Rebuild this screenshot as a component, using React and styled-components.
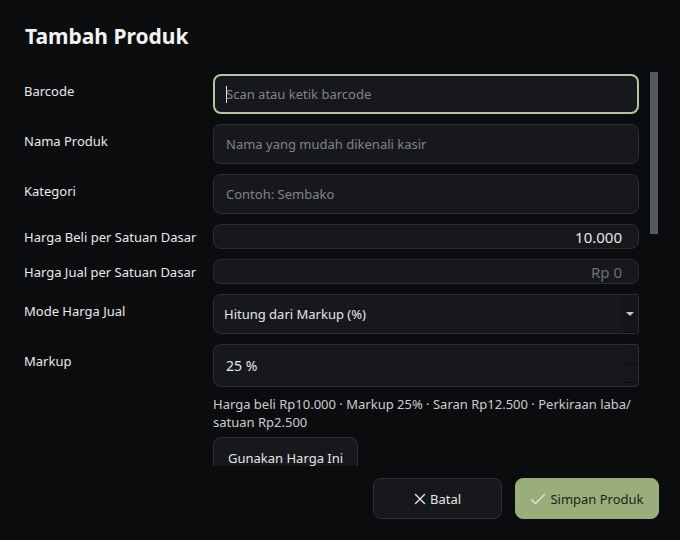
import React from 'react';
import styled, { createGlobalStyle, css } from 'styled-components';

const GlobalStyle = createGlobalStyle`
  html, body {
    margin: 0;
    padding: 0;
    background: #0b0c0e;
  }
  body {
    font-family: "Noto Sans", "DejaVu Sans", sans-serif;
    font-size: 13px;
    color: #e6e7e8;
  }
  * {
    box-sizing: border-box;
  }
`;

const Dialog = styled.div`
  width: 680px;
  height: 540px;
  display: flex;
  flex-direction: column;
  background: #0b0c0e;
  overflow: hidden;
`;

const Title = styled.h1`
  margin: 0;
  padding: 22px 25px 22px;
  font-size: 21px;
  line-height: 28px;
  font-weight: 700;
  color: #f3f3f3;
`;

const Body = styled.div`
  display: flex;
  gap: 11px;
  padding-left: 24px;
  height: 394px;
`;

const Scroller = styled.div`
  width: 615px;
  height: 100%;
  overflow: hidden;
`;

const Track = styled.div`
  width: 8px;
  height: 100%;
`;

const Thumb = styled.div`
  width: 100%;
  background: #56595e;
`;

const Form = styled.div`
  display: grid;
  grid-template-columns: 189px 426px;
  row-gap: 10px;
  padding-top: 2px;
  align-content: start;
`;

const Label = styled.label`
  font-size: 13px;
  line-height: 18px;
  color: #e9eaeb;
  ${(p) =>
    p.$compact
      ? css`
          align-self: center;
        `
      : css`
          align-self: start;
          padding-top: 8px;
        `}
`;

const fieldBox = css`
  width: 100%;
  background: #16181b;
  border: 1px solid #2b2e32;
  border-radius: 8px;
  color: #e6e7e8;
  font-family: inherit;
  font-size: 13px;
`;

const TextInput = styled.input`
  ${fieldBox}
  height: ${(p) => p.$h || 40}px;
  padding: 0 ${(p) => (p.$align === 'right' ? 16 : 12)}px;
  text-align: ${(p) => p.$align || 'left'};
  font-size: ${(p) => (p.$align === 'right' ? 15 : 13)}px;
  outline: none;
  caret-color: #e6e7e8;

  &::placeholder {
    color: ${(p) => (p.$dim ? '#6c6f74' : '#81848a')};
  }
`;

const Caret = styled.span`
  width: 1px;
  height: 17px;
  background: #e6e7e8;
  margin-right: -1px;
`;

const FocusField = styled.div`
  ${fieldBox}
  height: 40px;
  display: flex;
  align-items: center;
  border: 2px solid #b3c69e;
  padding: 0 11px;
  color: #81848a;
`;

const Select = styled.div`
  ${fieldBox}
  height: 40px;
  display: flex;
  align-items: stretch;
  border-radius: 8px 3px 3px 8px;
  overflow: hidden;
`;

const SelectValue = styled.span`
  flex: 1;
  display: flex;
  align-items: center;
  padding-left: 10px;
`;

const DropButton = styled.span`
  width: 16px;
  display: flex;
  align-items: center;
  justify-content: center;
  background: #131518;
  border-bottom: 1px solid #0c0d0f;

  &::after {
    content: '';
    border-left: 4px solid transparent;
    border-right: 4px solid transparent;
    border-top: 4px solid #c4c6c9;
  }
`;

const Spin = styled.div`
  ${fieldBox}
  height: 43px;
  display: flex;
  align-items: stretch;
  border-radius: 8px 3px 3px 8px;
  overflow: hidden;
`;

const SpinValue = styled.input`
  flex: 1;
  min-width: 0;
  background: transparent;
  border: 0;
  outline: none;
  padding: 0 12px;
  color: #e6e7e8;
  font-family: inherit;
  font-size: 14px;
`;

const SpinButtons = styled.div`
  width: 16px;
  display: flex;
  flex-direction: column;
  padding-bottom: 3px;
`;

const SpinButton = styled.span`
  flex: 1;
  background: #15171a;
  border-bottom: 1px solid #0b0c0e;
`;

const Extra = styled.div`
  grid-column: 2;
  display: flex;
  flex-direction: column;
  align-items: flex-start;
  gap: 6px;
  margin-top: -2px;
`;

const Hint = styled.p`
  margin: 0;
  font-size: 13px;
  line-height: 18px;
  color: #cbccce;
`;

const Button = styled.button`
  height: ${(p) => p.$h || 41}px;
  width: ${(p) => (p.$w ? `${p.$w}px` : 'auto')};
  display: inline-flex;
  align-items: center;
  justify-content: ${(p) => (p.$w ? 'center' : 'flex-start')};
  gap: 4px;
  padding: 0 ${(p) => (p.$w ? 6 : 14)}px;
  border-radius: 8px;
  font-family: inherit;
  font-size: 13px;
  white-space: nowrap;
  cursor: pointer;
  ${(p) =>
    p.$primary
      ? css`
          background: #9aae7c;
          border: 1px solid #9aae7c;
          color: #1b1f17;
        `
      : css`
          background: #16181b;
          border: 1px solid #2d3034;
          color: #e4e5e6;
        `}
`;

const Footer = styled.div`
  display: flex;
  justify-content: flex-end;
  gap: 13px;
  padding: 12px 21px 21px;
`;

const CloseIcon = () => (
  <svg width="12" height="12" viewBox="0 0 12 12" fill="none">
    <path d="M1.5 1.5 10.5 10.5M10.5 1.5 1.5 10.5" stroke="#e4e5e6" strokeWidth="1.4" strokeLinecap="round" />
  </svg>
);

const CheckIcon = () => (
  <svg width="16" height="12" viewBox="0 0 16 12" fill="none">
    <path d="M1.5 6.5 5.5 10.5 14.5 1.5" stroke="#dfe7d4" strokeWidth="1.4" strokeLinecap="round" strokeLinejoin="round" />
  </svg>
);

export default function App() {
  return (
    <Dialog>
      <GlobalStyle />
      <Title>Tambah Produk</Title>
      <Body>
        <Scroller>
          <Form>
            <Label>Barcode</Label>
            <FocusField>
              <Caret />
              Scan atau ketik barcode
            </FocusField>

            <Label>Nama Produk</Label>
            <TextInput placeholder="Nama yang mudah dikenali kasir" />

            <Label>Kategori</Label>
            <TextInput placeholder="Contoh: Sembako" />

            <Label $compact>Harga Beli per Satuan Dasar</Label>
            <TextInput $h={25} $align="right" defaultValue="10.000" />

            <Label $compact>Harga Jual per Satuan Dasar</Label>
            <TextInput $h={25} $align="right" $dim placeholder="Rp 0" />

            <Label>Mode Harga Jual</Label>
            <Select>
              <SelectValue>Hitung dari Markup (%)</SelectValue>
              <DropButton />
            </Select>

            <Label>Markup</Label>
            <Spin>
              <SpinValue defaultValue="25 %" />
              <SpinButtons>
                <SpinButton />
                <SpinButton />
              </SpinButtons>
            </Spin>

            <Extra>
              <Hint>
                Harga beli Rp10.000 · Markup 25% · Saran Rp12.500 · Perkiraan laba/<wbr />satuan Rp2.500
              </Hint>
              <Button $h={42}>Gunakan Harga Ini</Button>
            </Extra>

            <Label>Satuan Dasar</Label>
            <Select>
              <SelectValue>pcs</SelectValue>
              <DropButton />
            </Select>

            <Label>Stok Awal</Label>
            <TextInput placeholder="0" />
          </Form>
        </Scroller>
        <Track>
          <Thumb style={{ height: `${Math.round((394 * 394) / 958)}px` }} />
        </Track>
      </Body>
      <Footer>
        <Button $w={129}>
          <CloseIcon />
          Batal
        </Button>
        <Button $w={144} $primary>
          <CheckIcon />
          Simpan Produk
        </Button>
      </Footer>
    </Dialog>
  );
}
